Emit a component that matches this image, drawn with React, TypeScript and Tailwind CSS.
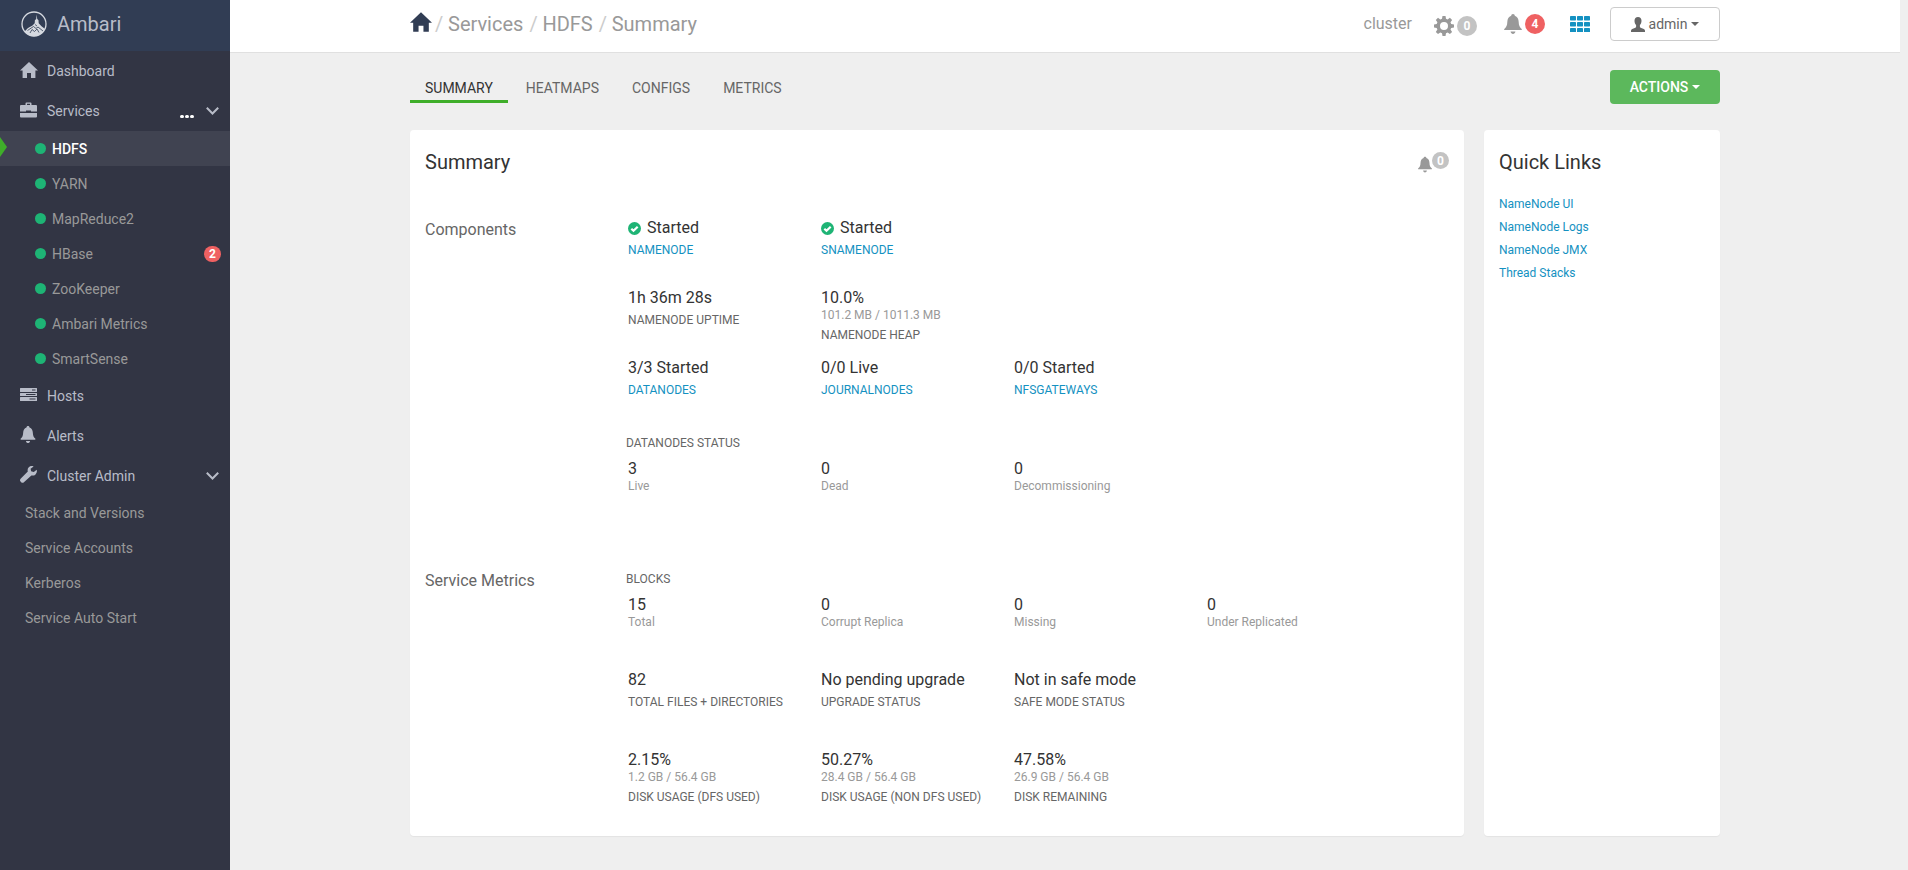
import { ReactNode } from 'react';

interface IconProps {
  className?: string;
}

interface Metric {
  value: string;
  sub?: string;
  label?: string;
  link?: boolean;
  ok?: boolean;
}

const services = [
  { name: 'HDFS', active: true },
  { name: 'YARN' },
  { name: 'MapReduce2' },
  { name: 'HBase', alerts: 2 },
  { name: 'ZooKeeper' },
  { name: 'Ambari Metrics' },
  { name: 'SmartSense' },
];

const adminItems = ['Stack and Versions', 'Service Accounts', 'Kerberos', 'Service Auto Start'];

const tabs = ['SUMMARY', 'HEATMAPS', 'CONFIGS', 'METRICS'];

const quickLinks = ['NameNode UI', 'NameNode Logs', 'NameNode JMX', 'Thread Stacks'];

const masters: Metric[] = [
  { value: 'Started', label: 'NAMENODE', link: true, ok: true },
  { value: 'Started', label: 'SNAMENODE', link: true, ok: true },
];

const namenode: Metric[] = [
  { value: '1h 36m 28s', label: 'NAMENODE UPTIME' },
  { value: '10.0%', sub: '101.2 MB / 1011.3 MB', label: 'NAMENODE HEAP' },
];

const slaves: Metric[] = [
  { value: '3/3 Started', label: 'DATANODES', link: true },
  { value: '0/0 Live', label: 'JOURNALNODES', link: true },
  { value: '0/0 Started', label: 'NFSGATEWAYS', link: true },
];

const datanodes: Metric[] = [
  { value: '3', sub: 'Live' },
  { value: '0', sub: 'Dead' },
  { value: '0', sub: 'Decommissioning' },
];

const blocks: Metric[] = [
  { value: '15', sub: 'Total' },
  { value: '0', sub: 'Corrupt Replica' },
  { value: '0', sub: 'Missing' },
  { value: '0', sub: 'Under Replicated' },
];

const statuses: Metric[] = [
  { value: '82', label: 'TOTAL FILES + DIRECTORIES' },
  { value: 'No pending upgrade', label: 'UPGRADE STATUS' },
  { value: 'Not in safe mode', label: 'SAFE MODE STATUS' },
];

const disk: Metric[] = [
  { value: '2.15%', sub: '1.2 GB / 56.4 GB', label: 'DISK USAGE (DFS USED)' },
  { value: '50.27%', sub: '28.4 GB / 56.4 GB', label: 'DISK USAGE (NON DFS USED)' },
  { value: '47.58%', sub: '26.9 GB / 56.4 GB', label: 'DISK REMAINING' },
];

function HomeIcon({ className }: IconProps) {
  return (
    <svg viewBox="0 0 18 16" fill="currentColor" className={className}>
      <path d="M9 0l9 8.6h-2.600V16H11v-5H7v5H2.600V8.600H0z" />
    </svg>
  );
}

function BriefcaseIcon({ className }: IconProps) {
  return (
    <svg viewBox="0 0 17 16" fill="currentColor" className={className}>
      <path
        fillRule="evenodd"
        d="M5.500 3V1.500Q5.500.500 6.500.500h4q1 0 1 1V3H16q1 0 1 1v5.500H11V8.500H6v1H0V4q0-1 1-1zM7 3h3V1.800H7zM0 11h17v3.500q0 1-1 1H1q-1 0-1-1z"
      />
    </svg>
  );
}

function HostsIcon({ className }: IconProps) {
  return (
    <svg viewBox="0 0 17 13" fill="currentColor" className={className}>
      <path
        fillRule="evenodd"
        d="M.5 0h16q.5 0 .5.500v3q0 .500-.500.500H.500Q0 4 0 3.500v-3Q0 0 .500 0zM12 1.500v1h3.500v-1zM.5 5h16q.5 0 .5.500v2q0 .500-.500.500H.500Q0 8 0 7.500v-2Q0 5 .500 5zM6 6v1h9.500V6zM.5 9h16q.5 0 .5.500v3q0 .500-.500.500H.500Q0 13 0 12.500v-3Q0 9 .500 9zM9.500 10.500v1h6v-1z"
      />
    </svg>
  );
}

function BellIcon({ className }: IconProps) {
  return (
    <svg viewBox="0 0 16 18" fill="currentColor" className={className}>
      <path d="M8 0c1 0 1.600.700 1.600 1.600C12 2.400 13 4.500 13.100 7c.1 3.300.9 5 2.500 6.200.7.500.4 1.300-.4 1.300H.800c-.8 0-1.100-.8-.4-1.300C2 12 2.800 10.300 2.900 7 3 4.500 4 2.400 6.400 1.600 6.400.700 7 0 8 0zM5.800 15.800h4.400C10 17.200 9 18 8 18s-2-.8-2.200-2.200z" />
    </svg>
  );
}

function WrenchIcon({ className }: IconProps) {
  return (
    <svg viewBox="0 0 17 17" fill="currentColor" className={className}>
      <path d="M13.600.400c-1.600-.700-3.600-.400-4.800.900C7.600 2.500 7.400 4 7.800 5.500L.600 12.700c-.8.8-.8 2.100 0 2.900l.6.700c.8.800 2 .7 2.700 0l7.500-6.900c1.400.4 3 .1 4.100-1 1.200-1.200 1.700-3 1.200-4.600l-2.900 2.300-2.700-.8-.5-2.500z" />
    </svg>
  );
}

function GearIcon({ className }: IconProps) {
  return (
    <svg viewBox="0 0 20 20" fill="currentColor" className={className}>
      <path
        fillRule="evenodd"
        d="M8.500 0h3l.5 2.700 1.600.7 2.300-1.600 2.200 2.200-1.600 2.300.7 1.700 2.800.500v3l-2.800.500-.7 1.600 1.600 2.300-2.200 2.200-2.300-1.600-1.600.7-.5 2.800h-3L8 17.200l-1.700-.7L4 18.100l-2.200-2.200 1.600-2.300L2.700 12 0 11.500v-3L2.700 8l.7-1.700L1.800 4 4 1.800l2.300 1.600L8 2.700zM10 6a4 4 0 100 8 4 4 0 000-8z"
      />
    </svg>
  );
}

function GridIcon({ className }: IconProps) {
  return (
    <svg viewBox="0 0 20 16" fill="currentColor" className={className}>
      {[0, 7, 14].map((x) =>
        [0, 6, 12].map((y) => <rect key={`${x}-${y}`} x={x} y={y} width="6" height="4.500" rx="0.700" />)
      )}
    </svg>
  );
}

function UserIcon({ className }: IconProps) {
  return (
    <svg viewBox="0 0 14 15" fill="currentColor" className={className}>
      <path d="M7 0c2.200 0 3.500 1.500 3.500 3.800 0 1.700-.6 3.300-1.600 4.200v1.700c0 .5.300.8.700 1l3.200 1.400c.8.400 1.200.9 1.200 1.700V15H0v-1.200c0-.8.400-1.300 1.200-1.700l3.200-1.400c.4-.2.700-.5.700-1V8c-1-.9-1.600-2.500-1.600-4.200C3.500 1.500 4.800 0 7 0z" />
    </svg>
  );
}

function CheckIcon({ className }: IconProps) {
  return (
    <svg viewBox="0 0 13 13" className={className}>
      <circle cx="6.500" cy="6.500" r="6.500" fill="#1eb475" />
      <path d="M3.300 6.700l2.200 2.100L9.700 4.700" fill="none" stroke="#fff" strokeWidth="2.200" />
    </svg>
  );
}

function ChevronIcon({ className }: IconProps) {
  return (
    <svg viewBox="0 0 13 8" fill="none" stroke="currentColor" strokeWidth="2" className={className}>
      <path d="M.8.800l5.700 5.700L12.200.800" />
    </svg>
  );
}

function CaretIcon({ className }: IconProps) {
  return (
    <svg viewBox="0 0 8 4" fill="currentColor" className={className}>
      <path d="M0 0h8L4 4z" />
    </svg>
  );
}

function Logo({ className }: IconProps) {
  return (
    <svg viewBox="0 0 26 26" className={className}>
      <circle cx="13" cy="13" r="12" fill="none" stroke="#d5d9e0" strokeWidth="1.300" />
      <path
        d="M15.700 3.500l.5 4.500 1.300 1.200.2 3 2.800 3 3.500 2.800A12 12 0 013.500 20.500l3.500-3.500 4.500-2.500 2.200-2.300.2-3 1.300-1.200z"
        fill="#d5d9e0"
      />
      <path
        d="M6.500 19.500l6-4 2.500 2 2-1.500 5 4M9 22l2-3.500 2.500 2 2.500-2.500 2 3.500M14 13.500l2 1.500"
        fill="none"
        stroke="#313d54"
        strokeWidth="0.800"
      />
    </svg>
  );
}

function NavItem({ icon, children, extra }: { icon: ReactNode; children: ReactNode; extra?: ReactNode }) {
  return (
    <div className="h-10 flex items-center pl-5 pr-[11px] text-[#b8bcc8]">
      <a href="#" className="flex flex-1 items-center">
        <span className="w-[27px] pb-[3px] flex">{icon}</span>
        {children}
      </a>
      {extra}
    </div>
  );
}

function Sidebar() {
  return (
    <aside className="w-[230px] shrink-0 bg-[#323544] text-sm">
      <a href="#" className="h-[51px] flex items-center gap-[10px] pl-[21px] pb-[3px] bg-[#313d54] text-xl text-[#b8bcc8]">
        <Logo className="w-[26px] h-[26px]" />
        Ambari
      </a>
      <nav>
        <NavItem icon={<HomeIcon className="w-[18px] h-4" />}>Dashboard</NavItem>
        <NavItem
          icon={<BriefcaseIcon className="w-[17px] h-4" />}
          extra={
            <>
              <button aria-label="Service actions" className="flex gap-px pt-[10px] mr-3">
                <span className="w-1 h-[3px] rounded-xs bg-white" />
                <span className="w-1 h-[3px] rounded-xs bg-white" />
                <span className="w-1 h-[3px] rounded-xs bg-white" />
              </button>
              <ChevronIcon className="w-[13px] h-2" />
            </>
          }
        >
          Services
        </NavItem>
        <ul>
          {services.map((service) => (
            <li key={service.name} className={`relative ${service.active ? 'bg-[#404351]' : ''}`}>
              {service.active && (
                <svg viewBox="0 0 7 20" className="absolute left-0 top-[6px] w-[7px] h-5 fill-[#3fae2a]">
                  <path d="M0 0l7 10-7 10z" />
                </svg>
              )}
              <a
                href="#"
                className={`h-[35px] flex items-center pl-[35px] pr-[9px] ${
                  service.active ? 'text-white font-medium' : 'text-[#999]'
                }`}
              >
                <span className="size-[11px] rounded-full bg-[#1eb475] mr-[6px]" />
                {service.name}
                {service.alerts && (
                  <span className="ml-auto w-[17px] h-4 rounded-full bg-[#ef6162] text-white text-xs leading-4 font-bold text-center">
                    {service.alerts}
                  </span>
                )}
              </a>
            </li>
          ))}
        </ul>
        <NavItem icon={<HostsIcon className="w-[17px] h-[13px]" />}>Hosts</NavItem>
        <NavItem icon={<BellIcon className="w-4 h-[17px]" />}>Alerts</NavItem>
        <NavItem icon={<WrenchIcon className="size-[17px]" />} extra={<ChevronIcon className="w-[13px] h-2" />}>
          Cluster Admin
        </NavItem>
        <ul>
          {adminItems.map((item) => (
            <li key={item}>
              <a href="#" className="h-[35px] flex items-center pl-[25px] pb-[2px] text-[#999]">
                {item}
              </a>
            </li>
          ))}
        </ul>
      </nav>
    </aside>
  );
}

function Header() {
  return (
    <header className="mr-2 h-[53px] bg-white border-b border-[#e0e0e0]">
      <div className="max-w-[1310px] h-12 mx-auto flex items-center justify-between">
        <nav className="flex items-center text-xl text-[#999]">
          <a href="#" aria-label="Home" className="mr-[3px] pb-1">
            <HomeIcon className="w-[22px] h-5 text-[#313d54]" />
          </a>
          {['Services', 'HDFS', 'Summary'].map((crumb) => (
            <span key={crumb} className="flex">
              <span className="w-[13px] text-[#ccc]">/</span>
              <a href="#" className="mr-[6px]">
                {crumb}
              </a>
            </span>
          ))}
        </nav>
        <div className="flex items-center text-base text-[#999]">
          <span className="mr-[22px]">cluster</span>
          <button className="flex items-center gap-[3px] pt-[3px] mr-[27px]" aria-label="Background operations">
            <GearIcon className="size-5" />
            <span className="size-5 rounded-full bg-[#c3c3c3] text-white text-xs leading-5 font-bold text-center">0</span>
          </button>
          <button className="flex items-center gap-[3px] mr-[25px]" aria-label="Alerts">
            <BellIcon className="w-[18px] h-5" />
            <span className="size-5 rounded-full bg-[#ef6162] text-white text-xs leading-5 font-bold text-center">4</span>
          </button>
          <button className="mr-5" aria-label="Views">
            <GridIcon className="w-5 h-4 text-[#1491c1]" />
          </button>
          <button className="w-[110px] h-[34px] flex items-center justify-center gap-1 rounded border border-[#ccc] text-sm text-[#666]">
            <UserIcon className="w-[14px] h-[15px]" />
            admin
            <CaretIcon className="w-2 h-1" />
          </button>
        </div>
      </div>
    </header>
  );
}

function MetricCell({ metric }: { metric: Metric }) {
  return (
    <div>
      <div className="flex items-center text-base leading-5 text-[#333]">
        {metric.ok && <CheckIcon className="w-[13px] h-[13px] mr-[6px]" />}
        {metric.value}
      </div>
      {metric.sub && <div className="text-xs leading-[15px] text-[#999]">{metric.sub}</div>}
      {metric.label && (
        <div className="mt-px text-xs leading-[22px] text-[#666]">
          {metric.link ? (
            <a href="#" className="text-[#1491c1]">
              {metric.label}
            </a>
          ) : (
            metric.label
          )}
        </div>
      )}
    </div>
  );
}

function MetricRow({ items, className }: { items: Metric[]; className?: string }) {
  return (
    <div className={`grid grid-cols-[repeat(4,193px)] pl-[2px] ${className ?? ''}`}>
      {items.map((metric, i) => (
        <MetricCell key={i} metric={metric} />
      ))}
    </div>
  );
}

function SummaryPanel() {
  return (
    <section className="flex-1 bg-white rounded shadow-[0_1px_1px_rgba(0,0,0,0.05)] px-[15px] pt-5 pb-7">
      <div className="flex items-start justify-between h-[68px]">
        <h2 className="text-xl leading-6 text-[#333]">Summary</h2>
        <button className="flex items-end pt-[2px] text-[#999]" aria-label="Service alerts">
          <BellIcon className="w-[14px] h-[17px]" />
          <span className="mb-1 size-[17px] rounded-full bg-[#c3c3c3] text-white text-xs leading-[18px] font-bold text-center">
            0
          </span>
        </button>
      </div>
      <div className="flex">
        <h3 className="w-[201px] shrink-0 text-base text-[#666]">Components</h3>
        <div>
          <MetricRow items={masters} className="h-[70px]" />
          <MetricRow items={namenode} className="h-[70px]" />
          <MetricRow items={slaves} className="h-[75px]" />
          <h4 className="mb-[6px] text-xs leading-5 text-[#666]">DATANODES STATUS</h4>
          <MetricRow items={datanodes} className="h-[110px]" />
        </div>
      </div>
      <div className="flex">
        <h3 className="w-[201px] shrink-0 text-base text-[#666]">Service Metrics</h3>
        <div>
          <h4 className="mb-[6px] text-xs leading-5 text-[#666]">BLOCKS</h4>
          <MetricRow items={blocks} className="h-[75px]" />
          <MetricRow items={statuses} className="h-20" />
          <MetricRow items={disk} />
        </div>
      </div>
    </section>
  );
}

export default function App() {
  return (
    <div className="min-h-screen flex bg-[#efefef] font-[Roboto,sans-serif]">
      <Sidebar />
      <div className="flex-1">
        <Header />
        <main className="mr-2 pb-8">
          <div className="max-w-[1310px] mx-auto">
            <div className="h-[77px] pt-[17px] flex items-start justify-between text-sm">
              <nav className="flex gap-[3px]">
                {tabs.map((tab, i) => (
                  <a
                    key={tab}
                    href="#"
                    className={`px-[15px] pt-2 pb-[2px] border-b-3 ${
                      i === 0 ? 'border-[#3fae2a] text-[#333]' : 'border-transparent text-[#666]'
                    }`}
                  >
                    {tab}
                  </a>
                ))}
              </nav>
              <button className="w-[110px] h-[34px] flex items-center justify-center gap-1 rounded bg-[#5cb85c] text-white font-medium">
                ACTIONS
                <CaretIcon className="w-2 h-1" />
              </button>
            </div>
            <div className="flex gap-5">
              <SummaryPanel />
              <section className="w-[236px] bg-white rounded shadow-[0_1px_1px_rgba(0,0,0,0.05)] px-[15px] pt-5">
                <h2 className="text-xl leading-6 text-[#333]">Quick Links</h2>
                <ul className="mt-[18px] text-xs">
                  {quickLinks.map((link) => (
                    <li key={link} className="h-[23px] flex items-center">
                      <a href="#" className="text-[#1491c1]">
                        {link}
                      </a>
                    </li>
                  ))}
                </ul>
              </section>
            </div>
          </div>
        </main>
      </div>
    </div>
  );
}
